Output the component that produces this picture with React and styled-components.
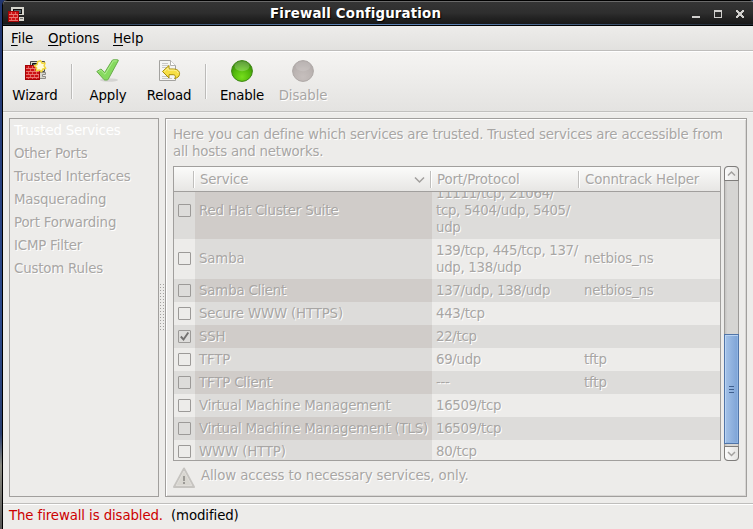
import React from "react";
import styled, { createGlobalStyle, css } from "styled-components";

const GlobalStyle = createGlobalStyle`
  * { box-sizing: border-box; }
  body { margin: 0; overflow: hidden; background: #edecea; }
`;

const etched = css`
  color: #a8a6a4;
  text-shadow: 1px 1px 0 #fff;
`;

const Desktop = styled.div`
  width: 753px;
  height: 529px;
  padding-left: 2px;
  background: linear-gradient(#22366f, #2c4a8c 60%, #2a3f70 82%, #8a8a80 88%, #555 100%);
  font: 13.33px/17px "DejaVu Sans", sans-serif;
  color: #000;
`;

const Window = styled.div`
  display: flex;
  flex-direction: column;
  height: 529px;
  border-left: 1px solid #000;
  border-radius: 5px 3px 0 0;
  background: #edecea;
  overflow: hidden;
`;

const TitleBar = styled.header`
  display: flex;
  align-items: center;
  height: 26px;
  flex: none;
  padding: 0 7px 0 5px;
  border-top: 1px solid #000;
  border-bottom: 1px solid #000;
  background:
    linear-gradient(90deg, #222a33, #5c82b4 45%, #5c82b4 60%, #222a33 98%) bottom / 100% 1px no-repeat,
    linear-gradient(#6a6a6a 0, #6a6a6a 1px, #353535 1px, #2e2e2e 50%, #232323 70%, #171717 100%);
`;

const Title = styled.h1`
  flex: 1;
  margin: 0;
  padding-right: 5px;
  text-align: center;
  font-size: 13.33px;
  line-height: 17px;
  font-weight: bold;
  letter-spacing: 0.17px;
  color: #fff;
  text-shadow: 1px 1px 1px #000;
`;

const MenuBar = styled.nav`
  display: flex;
  flex: none;
  height: 25px;
  padding: 4px 8px 0;
  gap: 14px;
  border-bottom: 1px solid #bfbebc;
  background: linear-gradient(#edecea, #e2e1df);
`;

const MenuItem = styled.span`
  width: ${(p) => p.$width}px;
  white-space: nowrap;
`;

const Mnemonic = styled.span`
  text-decoration: underline;
  text-underline-offset: 2px;
  text-decoration-thickness: 1px;
`;

const ToolBar = styled.div`
  display: flex;
  flex: none;
  height: 61px;
  padding-top: 8px;
  padding-left: 3px;
  border-top: 1px solid #fff;
  border-bottom: 1px solid #c1c0be;
  background: linear-gradient(#f5f4f2, #e4e3e1);
`;

const ToolButton = styled.div`
  display: flex;
  flex-direction: column;
  align-items: center;
  width: ${(p) => p.$width}px;
  white-space: nowrap;
  letter-spacing: ${(p) => p.$tracking || 0}px;
  ${(p) => p.$disabled && etched}
`;

const ToolIcon = styled.svg`
  display: block;
  width: 24px;
  height: 24px;
  margin-bottom: 3px;
  overflow: visible;
`;

const ToolSeparator = styled.div`
  width: 2px;
  height: 35px;
  margin: 4px ${(p) => p.$right}px 0 ${(p) => p.$left}px;
  border-left: 1px solid #bcbbb9;
  border-right: 1px solid #fafafa;
`;

const Content = styled.main`
  display: flex;
  height: 391px;
  flex: none;
  padding: 5px 6px 6px;
  border-top: 1px solid #f4f3f2;
`;

const Sidebar = styled.ul`
  width: 150px;
  height: 379px;
  margin: 0;
  padding: 0;
  list-style: none;
  border: 1px solid #a19f9d;
  letter-spacing: -0.18px;
`;

const SidebarItem = styled.li`
  height: 23px;
  padding: 3px 0 0 4px;
  ${etched}
  ${(p) => p.$selected && css`color: #fff; text-shadow: none;`}
`;

const Splitter = styled.div`
  display: flex;
  align-items: center;
  width: 6px;
  padding-left: 1px;
`;

const Grip = styled.div`
  width: 5px;
  height: 47px;
  background: radial-gradient(circle at 0.5px 0.5px, #a3a19f 0.7px, transparent 0.8px) 0 0 / 3px 3px;
`;

const Panel = styled.section`
  width: 582px;
  height: 379px;
  padding: 7px 6px 0;
  border: 1px solid #a19f9d;
  box-shadow: inset 1px 1px 0 #fff, inset -1px -1px 0 #d8d6d4;
`;

const Intro = styled.p`
  margin: 0 0 6px;
  padding-left: 1px;
  white-space: pre;
  letter-spacing: -0.18px;
  ${etched}
`;

const ScrollArea = styled.div`
  display: flex;
  gap: 3px;
  height: 295px;
  padding-left: 1px;
`;

const Table = styled.div`
  width: 548px;
  border: 1px solid #a19f9d;
  overflow: hidden;
`;

const columns = css`
  display: grid;
  grid-template-columns: 21px 237px 148px 140px;
`;

const TableHeader = styled.div`
  ${columns}
  height: 25px;
  border-bottom: 1px solid #a19f9d;
  background: linear-gradient(#fbfbfa, #e7e6e4);
  letter-spacing: -0.15px;
  ${etched}
`;

const HeaderCell = styled.div`
  display: flex;
  justify-content: space-between;
  height: 17px;
  margin: 4px 0 0 -2px;
  padding: 0 7px 0 6px;
  border-left: 1px solid #c0bfbd;
  box-shadow: inset 1px 0 0 #fff;
  white-space: nowrap;
`;

const SortArrow = styled.svg`
  display: block;
  width: 11px;
  height: 17px;
`;

const TableBody = styled.div`
  height: 268px;
  overflow: hidden;
`;

const ServiceRow = styled.div`
  ${columns}
  height: ${(p) => p.$lines * 17 + 6}px;
  margin-top: ${(p) => (p.$scrolled ? -10 : 0)}px;
  align-items: stretch;
  background: ${(p) => (p.$odd ? "#dddcda" : "#edecea")};
`;

const Cell = styled.div`
  display: flex;
  align-items: center;
  padding: 0 0 1px 4px;
  white-space: pre;
  letter-spacing: ${(p) => p.$tracking || -0.16}px;
  background: ${(p) => (p.$sorted ? (p.$odd ? "#d0ccc9" : "#dddcda") : "transparent")};
  ${etched}
`;

const Check = styled.span`
  display: block;
  width: 13px;
  height: 13px;
  border: 1px solid #9c9a98;
  border-radius: 1px;
`;

const CheckMark = styled.svg`
  display: block;
  width: 11px;
  height: 11px;
  overflow: visible;
`;

const ScrollBar = styled.div`
  display: flex;
  flex-direction: column;
  width: 15px;
  height: 295px;
  border: 1px solid #9c9a98;
  border-radius: 4px;
  background: linear-gradient(90deg, #c6c4c2, #d6d5d3 20%);
`;

const ScrollArrow = styled.svg`
  display: block;
  flex: none;
  width: 15px;
  height: 15px;
  margin: -1px;
  border: 1px solid #7f7d7b;
  border-radius: ${(p) => (p.$down ? "0 0 4px 4px" : "4px 4px 0 0")};
  background: linear-gradient(90deg, #fbfbfb, #e4e3e1);
`;

const ScrollThumb = styled.div`
  display: flex;
  flex-direction: column;
  align-items: center;
  justify-content: center;
  gap: 2px;
  flex: none;
  width: 15px;
  height: 110px;
  margin: 154px -1px 3px;
  border: 1px solid #5175a8;
  box-shadow: inset 1px 1px 0 #b9d3f2, inset -1px -1px 0 #8fb4e2;
  background: linear-gradient(90deg, #a4c2e8, #7da3d6);
`;

const ThumbLine = styled.i`
  width: 5px;
  height: 1px;
  background: #3f5f8e;
`;

const Notice = styled.div`
  display: flex;
  gap: 6px;
  padding: 6px 0 0 1px;
  letter-spacing: -0.11px;
  ${etched}
`;

const WarningIcon = styled.svg`
  width: 22px;
  height: 22px;
`;

const StatusBar = styled.footer`
  display: flex;
  gap: 8px;
  flex: 1;
  padding: 3px 6px 0;
  border-top: 1px solid #bfbebc;
  box-shadow: inset 0 1px 0 #fff;
  letter-spacing: -0.11px;
`;

const StatusAlert = styled.span`
  color: #cc0000;
`;

const AppIcon = styled.svg`
  display: block;
  width: 16px;
  height: 16px;
  margin-top: 2px;
`;

const WindowControls = styled.svg`
  display: block;
  width: 54px;
  height: 10px;
  margin-top: 2px;
`;

function BrickWall({ x, y, w, h }) {
  const rows = [];
  for (let i = 3; i < h - 1; i += 3) rows.push(i);
  return (
    <g shapeRendering="crispEdges">
      <rect x={x} y={y} width={w} height={h} fill="#cc1013" />
      {rows.map((r) => <rect key={r} x={x + 1} y={y + r} width={w - 2} height="1" fill="#e87570" />)}
      {[0, ...rows].map((r, i) =>
        [3, 7, 11].map((c) => {
          const cx = c + (i % 2 ? 2 : 0);
          return cx < w - 1 ? <rect key={`${r}-${c}`} x={x + cx} y={y + r + 1} width="1" height="2" fill="#e2605c" /> : null;
        })
      )}
      <rect x={x + 0.5} y={y + 0.5} width={w - 1} height={h - 1} fill="none" stroke="#a30406" />
    </g>
  );
}

function WizardIcon() {
  return (
    <ToolIcon viewBox="0 0 24 24">
      <path d="M7.500 1.500h14v10h-14z" fill="#dcdbd3" stroke="#4a4a48" />
      <path d="M9.500 3.500h10v6h-10z" fill="#50636e" stroke="#111" />
      <path d="M16.500 12.500h6v2h-3v2h3v2h-6z" fill="#d8d7cf" stroke="#8e8d88" />
      <BrickWall x={2} y={5} w={15} h={15} />
      <path d="M17.500 .6l1.500 2.600 3-.1-.9 2.800 1.600 2.500-2.900.7-1.200 2.700-2.300-1.900-2.900.9.200-3-2.200-2 2.700-1.200.6-2.900z" fill="#fffbd8" stroke="#f2d63a" strokeWidth="1.500" strokeLinejoin="round" />
    </ToolIcon>
  );
}

function ApplyIcon() {
  return (
    <ToolIcon viewBox="0 0 24 24">
      <ellipse cx="13" cy="20" rx="9" ry="1.800" fill="#000" opacity=".1" />
      <path d="M.8 11.500L5 9 8.700 12.500 16.200.4Q16.500-.2 17.200-.2H21.600Q22.700-.2 22.200.9L12.200 19.300Q11.900 19.900 11.200 20H9Q8.300 20 7.900 19.500z" fill="#86da5e" stroke="#68ad4a" strokeLinejoin="round" />
      <path d="M2.300 11.600l2.500-1.400L9 14.300 17.300 .9h3.500" fill="none" stroke="#b0ec92" />
    </ToolIcon>
  );
}

function ReloadIcon() {
  return (
    <ToolIcon viewBox="0 0 24 24">
      <path d="M2.500.5h11l5 5v15h-16z" fill="#f5f5f4" stroke="#a3a29f" />
      <path d="M13.500.5v5h5" fill="#fff" stroke="#b1b0ad" />
      <path d="M5 3.500h6M5 5.500h6M5 7.500h5M5 16.500h5M5 18.500h10" stroke="#c9c9c7" />
      <path d="M5.500 11.500l6.500-6v3.500h4.500c4.500 0 6.500 3 6 5.500-.4 2-2 3.500-5 4 1.500-1.500 1-3.800-1.500-3.800h-4v3.300z" fill="#f7df45" stroke="#a78c08" strokeLinejoin="round" />
      <path d="M7.200 11.500l3.900-3.600v2.200h5.400c2.500 0 4.300 1.200 4.800 3" fill="none" stroke="#fff39b" />
    </ToolIcon>
  );
}

function LampIcon({ off }) {
  const id = off ? "lampOff" : "lampOn";
  return (
    <ToolIcon viewBox="0 0 24 24">
      <defs>
        <radialGradient id={id} cx="50%" cy="78%" r="75%">
          <stop offset="0" stopColor={off ? "#c6bfbd" : "#76de1c"} />
          <stop offset=".55" stopColor={off ? "#bcb5b3" : "#52b80b"} />
          <stop offset="1" stopColor={off ? "#b0a9a8" : "#338006"} />
        </radialGradient>
      </defs>
      <circle cx="12" cy="11" r="10.400" fill={`url(#${id})`} stroke={off ? "#aea8a6" : "#3b8512"} />
      <ellipse cx="12" cy="6.200" rx="7.500" ry="5" fill="#fff" opacity={off ? 0.12 : 0.22} />
    </ToolIcon>
  );
}

const sections = ["Trusted Services", "Other Ports", "Trusted Interfaces", "Masquerading", "Port Forwarding", "ICMP Filter", "Custom Rules"];

const services = [
  { name: "Red Hat Cluster Suite", ports: "11111/tcp, 21064/\ntcp, 5404/udp, 5405/\nudp", lines: 3 },
  { name: "Samba", ports: "139/tcp, 445/tcp, 137/\nudp, 138/udp", helper: "netbios_ns", lines: 2 },
  { name: "Samba Client", ports: "137/udp, 138/udp", helper: "netbios_ns" },
  { name: "Secure WWW (HTTPS)", ports: "443/tcp" },
  { name: "SSH", ports: "22/tcp", checked: true },
  { name: "TFTP", ports: "69/udp", helper: "tftp" },
  { name: "TFTP Client", ports: "---", helper: "tftp" },
  { name: "Virtual Machine Management", ports: "16509/tcp" },
  { name: "Virtual Machine Management (TLS)", ports: "16509/tcp" },
  { name: "WWW (HTTP)", ports: "80/tcp" },
];

export default function App() {
  return (
    <Desktop>
      <GlobalStyle />
      <Window>
        <TitleBar>
          <AppIcon viewBox="0 0 16 16" shapeRendering="crispEdges">
            <path d="M3 1h13v8H3zM11 11h5v4h-5z" fill="#d6d5cd" />
            <path d="M5 3h9v5H5z" fill="#111" />
            <path d="M6 4h7v3H6z" fill="#53636b" />
            <path d="M12 12h3v1h-3z" fill="#777" />
            <BrickWall x={0} y={5} w={11} h={11} />
          </AppIcon>
          <Title>Firewall Configuration</Title>
          <WindowControls viewBox="0 0 54 10" shapeRendering="crispEdges" fill="#d0cfcd">
            <path d="M0 7h8v2H0z" />
            <path fillRule="evenodd" d="M22 1h8v8h-8zM23 3v5h6V3z" />
            <path d="M44 1h2v1h1v1h2V2h1V1h2v2h-1v1h-1v2h1v1h1v2h-2V8h-1V7h-2v1h-1v1h-2V7h1V6h1V4h-1V3h-1z" />
          </WindowControls>
        </TitleBar>
        <MenuBar>
          <MenuItem $width={23}><Mnemonic>F</Mnemonic>ile</MenuItem>
          <MenuItem $width={51}><Mnemonic>O</Mnemonic>ptions</MenuItem>
          <MenuItem $width={31}><Mnemonic>H</Mnemonic>elp</MenuItem>
        </MenuBar>
        <ToolBar>
          <ToolButton $width={58}><WizardIcon />Wizard</ToolButton>
          <ToolSeparator $left={7} $right={7} />
          <ToolButton $width={56} $tracking={-0.1}><ApplyIcon />Apply</ToolButton>
          <ToolButton $width={66} $tracking={-0.1}><ReloadIcon />Reload</ToolButton>
          <ToolSeparator $left={3} $right={5} />
          <ToolButton $width={60} $tracking={-0.2}><LampIcon />Enable</ToolButton>
          <ToolButton $width={62} $tracking={-0.1} $disabled><LampIcon off />Disable</ToolButton>
        </ToolBar>
        <Content>
          <Sidebar>
            {sections.map((s, i) => <SidebarItem key={s} $selected={i === 0}>{s}</SidebarItem>)}
          </Sidebar>
          <Splitter><Grip /></Splitter>
          <Panel>
            <Intro>{"Here you can define which services are trusted. Trusted services are accessible from\nall hosts and networks."}</Intro>
            <ScrollArea>
              <Table>
                <TableHeader>
                  <span />
                  <HeaderCell>
                    Service
                    <SortArrow viewBox="0 0 11 17"><path d="M1 6.500l4.500 4.500L10 6.500" fill="none" stroke="#a19f9d" strokeWidth="1.500" /></SortArrow>
                  </HeaderCell>
                  <HeaderCell>Port/Protocol</HeaderCell>
                  <HeaderCell>Conntrack Helper</HeaderCell>
                </TableHeader>
                <TableBody>
                  {services.map((s, i) => {
                    const odd = i % 2 === 0;
                    return (
                      <ServiceRow key={s.name} $lines={s.lines || 1} $odd={odd} $scrolled={i === 0}>
                        <Cell>
                          <Check>
                            {s.checked && <CheckMark viewBox="0 0 11 11"><path d="M1.800 5.500l2.700 3L9.300 1.500" fill="none" stroke="#737170" strokeWidth="1.900" /></CheckMark>}
                          </Check>
                        </Cell>
                        <Cell $sorted $odd={odd}>{s.name}</Cell>
                        <Cell $tracking={-0.31}>{s.ports}</Cell>
                        <Cell>{s.helper}</Cell>
                      </ServiceRow>
                    );
                  })}
                </TableBody>
              </Table>
              <ScrollBar>
                <ScrollArrow viewBox="0 0 13 13"><path d="M3 8.500L6.500 5 10 8.500" fill="none" stroke="#a3a19f" strokeWidth="1.500" /></ScrollArrow>
                <ScrollThumb><ThumbLine /><ThumbLine /><ThumbLine /></ScrollThumb>
                <ScrollArrow $down viewBox="0 0 13 13"><path d="M3 5L6.500 8.500 10 5" fill="none" stroke="#a3a19f" strokeWidth="1.500" /></ScrollArrow>
              </ScrollBar>
            </ScrollArea>
            <Notice>
              <WarningIcon viewBox="0 0 22 22">
                <path d="M11 1.500L21 20H1z" fill="#d5d3cf" stroke="#c6c4c0" strokeWidth="2" strokeLinejoin="round" />
                <path d="M11 4L18.800 18.500H3.200z" fill="#d8d6d0" stroke="#e2e0dc" strokeWidth=".8" />
                <path d="M10 9h2v5h-2zM10 15h2v2h-2z" fill="#9c9a96" />
              </WarningIcon>
              Allow access to necessary services, only.
            </Notice>
          </Panel>
        </Content>
        <StatusBar>
          <StatusAlert>The firewall is disabled.</StatusAlert>
          <span>(modified)</span>
        </StatusBar>
      </Window>
    </Desktop>
  );
}
